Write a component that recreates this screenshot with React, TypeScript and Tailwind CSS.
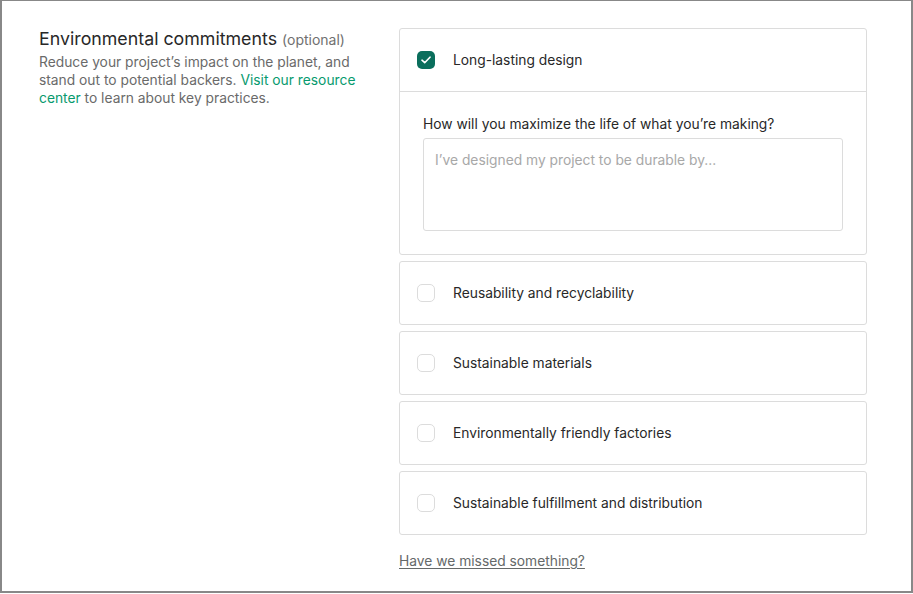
import React from 'react';

const items = [
	'Reusability and recyclability',
	'Sustainable materials',
	'Environmentally friendly factories',
	'Sustainable fulfillment and distribution',
];

const CheckIcon: React.FC = () => (
	<svg width="10" height="8" viewBox="0 0 10 8" fill="none">
		<path d="M1 4.2L3.7 6.7L9 1.2" stroke="white" strokeWidth="1.6" strokeLinecap="round" strokeLinejoin="round" />
	</svg>
);

const App: React.FC = () => {
	return (
		<div className="w-[913px] h-[594px] bg-white" style={{ fontFamily: 'Inter, "Noto Sans", sans-serif' }}>
			<div className="w-[913px] h-[593px] border-t border-l-2 border-r-2 border-b-2 border-[#888888] pt-[27px] pl-[37px] flex text-[#282828]">
				{/* left column */}
				<div className="w-[323px] shrink-0">
					<h2 className="text-[17.8px] leading-6 -mt-[1px]">
						Environmental commitments <span className="text-[14px] text-[#707070]">(optional)</span>
					</h2>
					<p className="text-[13.8px] leading-[18px] text-[#6a6a6a] mt-[1px]">
						Reduce your project’s impact on the planet, and stand out to potential backers.{' '}
						<a className="text-[#079a6e] whitespace-nowrap">Visit our resource</a>{' '}
						<a className="text-[#079a6e]">center</a> to learn about key practices.
					</p>
				</div>

				{/* right column */}
				<div className="ml-[37px] w-[468px] flex flex-col">
					<div className="border border-[#dcdcdc] rounded-[3px]">
						<div className="h-[63px] flex items-center pl-[17px] border-b border-[#dcdcdc]">
							<span className="w-[18px] h-[18px] rounded-[5px] bg-[#0a6e5c] flex items-center justify-center">
								<CheckIcon />
							</span>
							<span className="ml-[18px] text-[13.8px]">Long-lasting design</span>
						</div>
						<div className="px-[23px] pt-[23px] pb-[23px]">
							<label className="block text-[13.8px] leading-[18px]">How will you maximize the life of what you’re making?</label>
							<div className="mt-[5px] h-[93px] border border-[#dcdcdc] rounded-[3px] px-[11px] pt-[11px] text-[13.8px] text-[#a8a8a8]">
								I’ve designed my project to be durable by...
							</div>
						</div>
					</div>

					{items.map((label) => (
						<div key={label} className="mt-[6px] h-[64px] border border-[#dcdcdc] rounded-[3px] flex items-center pl-[17px]">
							<span className="w-[18px] h-[18px] rounded-[5px] border border-[#dcdcdc] bg-white" />
							<span className="ml-[18px] text-[13.8px]">{label}</span>
						</div>
					))}

					<a className="mt-[17px] text-[13.8px] leading-[18px] text-[#656969] underline underline-offset-2 self-start">
						Have we missed something?
					</a>
				</div>
			</div>
		</div>
	);
};

export default App;
